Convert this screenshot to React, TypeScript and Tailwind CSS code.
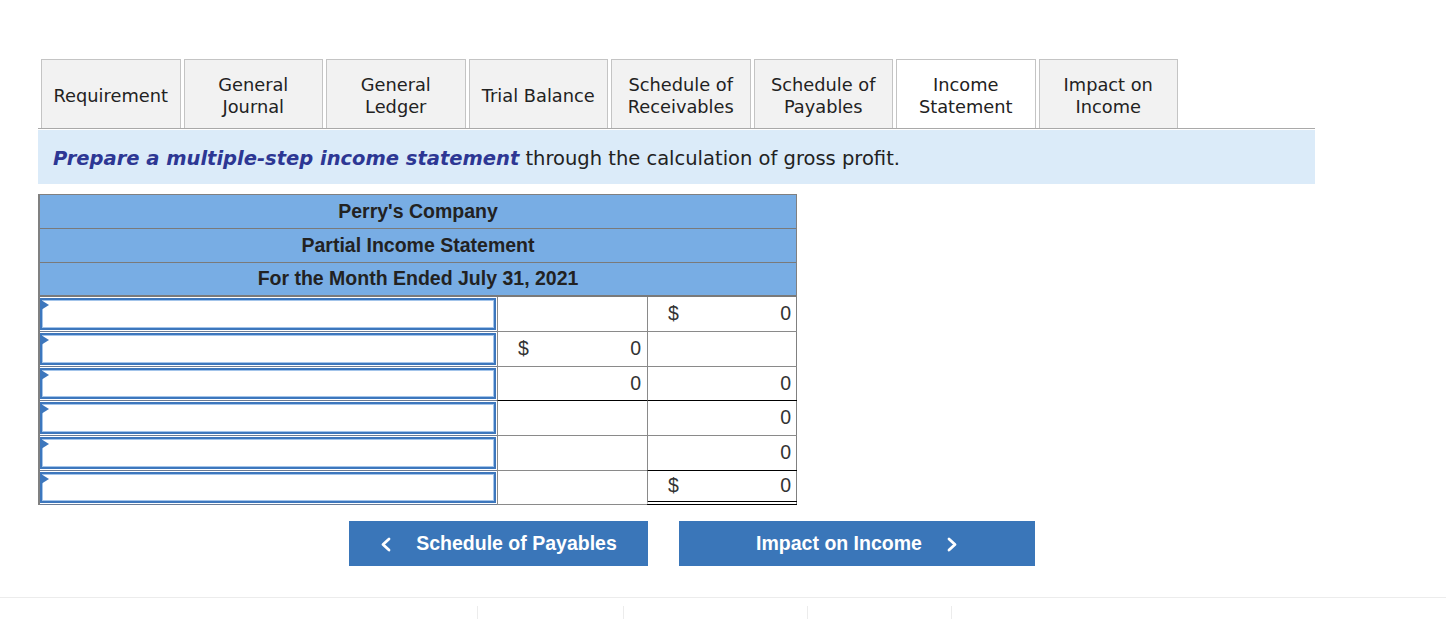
type Amount = { dollar?: boolean; value: string } | null

interface Row {
  height: string
  c2: Amount
  c3: Amount
  b2: string
  b3: string
}

const TABS = [
  { lines: ['Requirement'], active: false },
  { lines: ['General', 'Journal'], active: false },
  { lines: ['General', 'Ledger'], active: false },
  { lines: ['Trial Balance'], active: false },
  { lines: ['Schedule of', 'Receivables'], active: false },
  { lines: ['Schedule of', 'Payables'], active: false },
  { lines: ['Income', 'Statement'], active: true },
  { lines: ['Impact on', 'Income'], active: false },
]

const GRAY = 'border-b border-b-[#8a8a8a]'
const BLACK = 'border-b border-b-black'
const DOUBLE = 'border-b-[4px] border-double border-b-black'

const ROWS: Row[] = [
  { height: 'h-[35px]', c2: null, c3: { dollar: true, value: '0' }, b2: GRAY, b3: GRAY },
  { height: 'h-[35px]', c2: { dollar: true, value: '0' }, c3: null, b2: GRAY, b3: GRAY },
  { height: 'h-[34px]', c2: { value: '0' }, c3: { value: '0' }, b2: BLACK, b3: BLACK },
  { height: 'h-[35px]', c2: null, c3: { value: '0' }, b2: GRAY, b3: GRAY },
  { height: 'h-[35px]', c2: null, c3: { value: '0' }, b2: GRAY, b3: BLACK },
  { height: 'h-[34px]', c2: null, c3: { dollar: true, value: '0' }, b2: GRAY, b3: DOUBLE },
]

// thick white chevron used on the nav buttons
function Chevron({ dir }: { dir: 'left' | 'right' }) {
  return (
    <svg width="12" height="15" viewBox="0 0 12 15" fill="none">
      <polyline
        points={dir === 'left' ? '9,2 3,7.5 9,13' : '3,2 9,7.5 3,13'}
        stroke="white"
        strokeWidth="2.8"
        strokeLinecap="round"
        strokeLinejoin="round"
      />
    </svg>
  )
}

function AmountCell({ amount, border }: { amount: Amount; border: string }) {
  return (
    <div
      className={`flex items-center justify-between border-l border-l-[#8a8a8a] pl-[20px] pr-[6px] text-[19.5px] text-[#333] ${border}`}
    >
      <span>{amount?.dollar ? '$' : ''}</span>
      <span>{amount?.value ?? ''}</span>
    </div>
  )
}

function EntryInput() {
  return (
    <div className="relative h-full border-b border-b-[#6b7c95] py-[1px] pr-[1px]">
      <input
        type="text"
        className="h-full w-full border-2 border-[#3d77bd] bg-white shadow-[inset_0_0_0_1px_#a3c4ea] outline-none"
      />
      <span className="absolute left-[1px] top-[3px] z-10 h-0 w-0 border-y-[5px] border-l-[8px] border-y-transparent border-l-[#3d77bd]" />
    </div>
  )
}

export default function App() {
  return (
    <div className="min-h-[619px] bg-white pt-[59px] font-['Liberation_Sans',Arial,sans-serif] text-[#222]">
      {/* Tabs */}
      <div className="ml-[38px] flex w-[1277px] gap-[3px] border-b border-b-[#a9a9a9] pl-[3px] font-['DejaVu_Sans',Verdana,sans-serif]">
        {TABS.map((tab) => (
          <div
            key={tab.lines.join(' ')}
            className={`flex h-[69px] w-[139.5px] flex-col items-center justify-center border border-b-0 border-[#c4c4c4] pt-[4px] text-[17.8px] leading-[21.7px] text-[#222] ${
              tab.active ? 'bg-white' : 'bg-[#f2f2f2]'
            }`}
          >
            {tab.lines.map((line) => (
              <span key={line}>{line}</span>
            ))}
          </div>
        ))}
      </div>

      {/* Instruction bar */}
      <div className="ml-[38px] mt-[1px] flex h-[54px] w-[1277px] items-center bg-[#dbebf9] pl-[15px] pt-[3px] font-['DejaVu_Sans',Verdana,sans-serif] text-[19.5px] text-[#222]">
        <span className="font-bold italic text-[#2d3794]">Prepare a multiple-step income statement</span>
        <span className="whitespace-pre"> through the calculation of gross profit.</span>
      </div>

      {/* Statement table */}
      <div className="ml-[38px] mt-[10px] w-[759px] border-l-2 border-r border-t border-[#808080]">
        {["Perry's Company", 'Partial Income Statement', 'For the Month Ended July 31, 2021'].map((title, i) => (
          <div
            key={title}
            className={`flex h-[34px] items-center justify-center bg-[#78ade4] text-[19.5px] font-bold text-[#222] ${
              i === 2 ? 'border-b-2 border-b-[#7a7a7a]' : 'border-b border-b-[#7a7a7a]'
            }`}
          >
            {title}
          </div>
        ))}
        {ROWS.map((row, i) => (
          <div key={i} className={`grid grid-cols-[457px_150px_150px] ${row.height}`}>
            <EntryInput />
            <AmountCell amount={row.c2} border={row.b2} />
            <AmountCell amount={row.c3} border={row.b3} />
          </div>
        ))}
      </div>

      {/* Navigation buttons */}
      <div className="ml-[349px] mt-[16px] flex gap-[31px] text-[19.5px] font-bold text-white">
        <button
          type="button"
          className="flex h-[45px] w-[299px] items-center justify-center gap-[24px] bg-[#3a76b9] pt-[1px]"
        >
          <Chevron dir="left" />
          Schedule of Payables
        </button>
        <button
          type="button"
          className="flex h-[45px] w-[356px] items-center justify-center gap-[24px] bg-[#3a76b9] pt-[1px]"
        >
          Impact on Income
          <Chevron dir="right" />
        </button>
      </div>

      {/* Footer strip */}
      <div className="mt-[31px] border-t border-t-[#ececec]">
        <div className="ml-[477px] mt-[8px] flex h-[14px]">
          <div className="w-[146px] border-l border-l-[#ececec]" />
          <div className="w-[184px] border-l border-l-[#ececec]" />
          <div className="w-[144px] border-l border-l-[#ececec]" />
          <div className="w-[10px] border-l border-l-[#ececec]" />
        </div>
      </div>
    </div>
  )
}
